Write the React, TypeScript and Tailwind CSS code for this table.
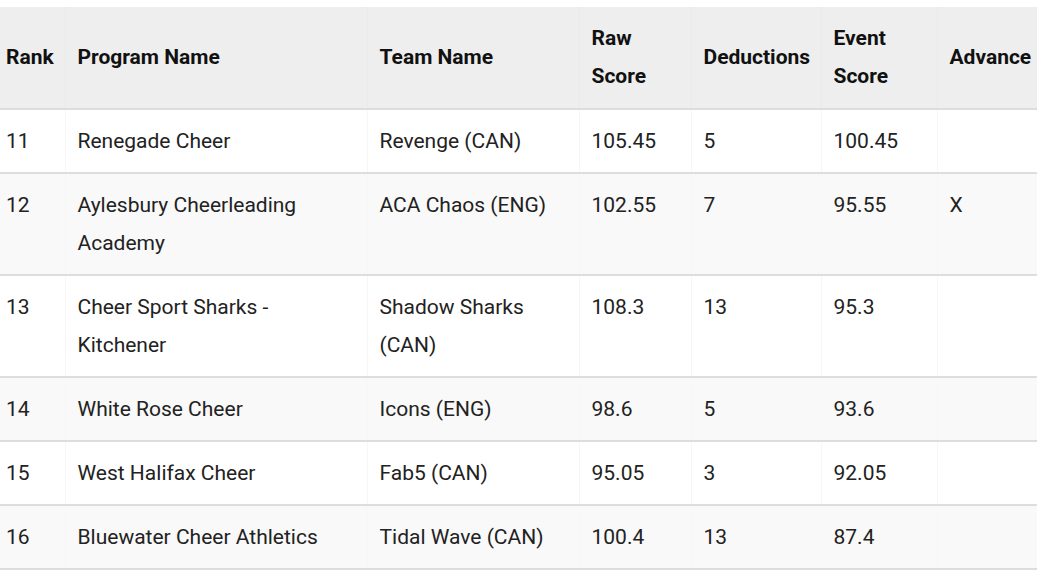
import React from "react";

type Row = {
  rank: number;
  program: string;
  team: string;
  raw: string;
  ded: string;
  event: string;
  adv?: string;
};

const rows: Row[] = [
  { rank: 11, program: "Renegade Cheer", team: "Revenge (CAN)", raw: "105.45", ded: "5", event: "100.45" },
  { rank: 12, program: "Aylesbury Cheerleading Academy", team: "ACA Chaos (ENG)", raw: "102.55", ded: "7", event: "95.55", adv: "X" },
  { rank: 13, program: "Cheer Sport Sharks - Kitchener", team: "Shadow Sharks (CAN)", raw: "108.3", ded: "13", event: "95.3" },
  { rank: 14, program: "White Rose Cheer", team: "Icons (ENG)", raw: "98.6", ded: "5", event: "93.6" },
  { rank: 15, program: "West Halifax Cheer", team: "Fab5 (CAN)", raw: "95.05", ded: "3", event: "92.05" },
  { rank: 16, program: "Bluewater Cheer Athletics", team: "Tidal Wave (CAN)", raw: "100.4", ded: "13", event: "87.4" },
];

const th = "pt-3 pb-[13px] pl-3 pr-2 text-left align-middle font-bold text-[#111111] border-l border-[#eaeaea]";
const td = "py-3 pl-3 pr-2 align-top border-l border-[#f7f7f7]";

export default function App() {
  return (
    <div className="w-[1037px] h-[577px] overflow-hidden bg-white pt-[7px] font-['Roboto',sans-serif] text-[21px] leading-[38px] text-[#222222]">
      <table className="w-[1037px] table-fixed border-collapse">
        <colgroup>
          <col className="w-[65px]" />
          <col className="w-[302px]" />
          <col className="w-[212px]" />
          <col className="w-[112px]" />
          <col className="w-[130px]" />
          <col className="w-[116px]" />
          <col className="w-[100px]" />
        </colgroup>
        <thead>
          <tr className="bg-[#eeeeee] border-b-2 border-[#dddddd]">
            <th className="pt-3 pb-[13px] pl-[6px] pr-1 text-left align-middle font-bold text-[#111111]">Rank</th>
            <th className={th}>Program Name</th>
            <th className={th}>Team Name</th>
            <th className={th}>Raw<br />Score</th>
            <th className={th}>Deductions</th>
            <th className={th}>Event<br />Score</th>
            <th className={th}>Advance</th>
          </tr>
        </thead>
        <tbody>
          {rows.map((r, i) => (
            <tr
              key={r.rank}
              className={`border-b-2 border-[#dddddd] ${i % 2 === 1 ? "bg-[#f9f9f9]" : "bg-white"}`}
            >
              <td className="py-3 pl-[6px] pr-1 align-top">{r.rank}</td>
              <td className={td}>{r.program}</td>
              <td className={td}>{r.team}</td>
              <td className={td}>{r.raw}</td>
              <td className={td}>{r.ded}</td>
              <td className={td}>{r.event}</td>
              <td className={td}>{r.adv ?? ""}</td>
            </tr>
          ))}
        </tbody>
      </table>
    </div>
  );
}
